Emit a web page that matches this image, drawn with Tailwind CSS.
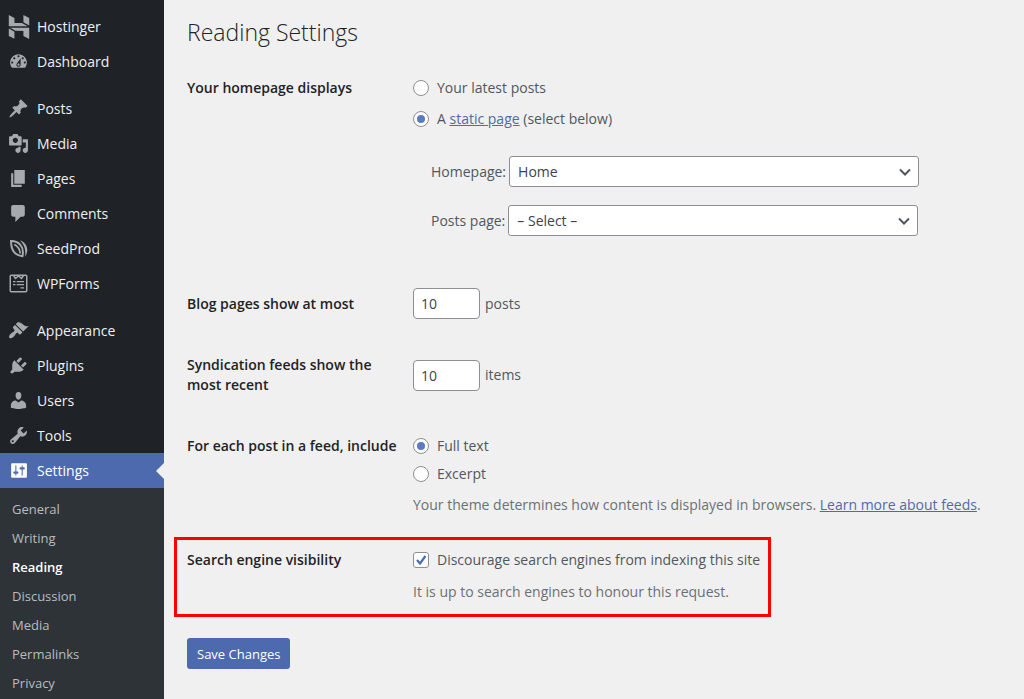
<!DOCTYPE html>
<html lang="en">
<head>
    <meta charset="UTF-8">
    <meta name="viewport" content="width=device-width, initial-scale=1.0">
    <title>Reading Settings</title>
    <script src="https://cdn.jsdelivr.net/npm/@tailwindcss/browser@4"></script>
</head>
<body class="bg-[#f0f0f0] font-['Open_Sans','Noto_Sans',sans-serif] text-sm text-[#50575e]">
    <div class="flex h-screen overflow-hidden">
        <!-- Admin menu -->
        <nav class="flex w-41 shrink-0 flex-col bg-[#1f2327] pt-[9px] text-[#f0f0f1]">
            <ul>
                <li><a href="#" class="flex h-[35px] items-center">
                    <span class="flex w-[37px] justify-center text-[#a7aaad]"><svg class="size-6" viewBox="0 0 24 24" fill="currentColor"><path d="M16.415 0v7.16l5.785 3.384V2.949L16.415 0ZM1.8 0v11.237h18.815L14.89 8.09l-7.457-.003V3.024L1.8 0Zm14.615 20.894v-5.019l-7.514-.005c.007.033-5.82-3.197-5.82-3.197l19.119.091V24l-5.785-3.106ZM1.8 13.551v7.343l5.633 2.949v-6.988L1.8 13.551Z"/></svg></span>
                    Hostinger</a></li>
                <li><a href="#" class="flex h-[35px] items-center">
                    <span class="flex w-[37px] justify-center text-[#a7aaad]"><svg class="size-[21px]" viewBox="0 0 20 20" fill="currentColor"><path d="M3.76 16h12.48c1.1-1.37 1.76-3.11 1.76-5 0-4.42-3.58-8-8-8s-8 3.58-8 8c0 1.89.66 3.63 1.76 5zM10 4c.55 0 1 .45 1 1s-.45 1-1 1-1-.45-1-1 .45-1 1-1zM6 6c.55 0 1 .45 1 1s-.45 1-1 1-1-.45-1-1 .45-1 1-1zm8 0c.55 0 1 .45 1 1s-.45 1-1 1-1-.45-1-1 .45-1 1-1zm-5.37 5.55L12 7v6c0 1.1-.9 2-2 2s-2-.9-2-2c0-.57.24-1.08.63-1.45zM4 10c.55 0 1 .45 1 1s-.45 1-1 1-1-.45-1-1 .45-1 1-1zm12 0c.55 0 1 .45 1 1s-.45 1-1 1-1-.45-1-1 .45-1 1-1zm-5 3c0-.55-.45-1-1-1s-1 .45-1 1 .45 1 1 1 1-.45 1-1z"/></svg></span>
                    Dashboard</a></li>
            </ul>
            <ul class="pt-3">
                <li><a href="#" class="flex h-[35px] items-center">
                    <span class="flex w-[37px] justify-center text-[#a7aaad]"><svg class="size-[21px]" viewBox="0 0 20 20" fill="currentColor"><path d="M10.44 3.02l1.82-1.82 6.36 6.35-1.83 1.82c-1.05-.68-2.48-.57-3.41.36l-.75.75c-.92.93-1.04 2.35-.35 3.41l-1.83 1.82-2.41-2.41-2.8 2.79c-.42.42-3.38 2.71-3.8 2.29s1.86-3.39 2.28-3.81l2.79-2.79L4.1 9.36l1.83-1.82c1.05.69 2.48.57 3.4-.36l.75-.75c.93-.92 1.05-2.35.36-3.41z"/></svg></span>
                    Posts</a></li>
                <li><a href="#" class="flex h-[35px] items-center">
                    <span class="flex w-[37px] justify-center text-[#a7aaad]"><svg class="size-[21px]" viewBox="0 0 20 20" fill="currentColor"><path d="M13 11V4c0-.55-.45-1-1-1h-1.67L9 1H5L3.67 3H2c-.55 0-1 .45-1 1v7c0 .55.45 1 1 1h10c.55 0 1-.45 1-1zM7 4.5c1.38 0 2.5 1.12 2.5 2.5S8.38 9.5 7 9.5 4.5 8.38 4.5 7 5.62 4.5 7 4.5zM14 6h5v10.5c0 1.38-1.12 2.5-2.5 2.5S14 17.88 14 16.5s1.12-2.5 2.5-2.5c.17 0 .34.02.5.05V9h-3V6zm-4 8.05V13h2v3.5c0 1.38-1.12 2.5-2.5 2.5S7 17.88 7 16.5 8.12 14 9.5 14c.17 0 .34.02.5.05z"/></svg></span>
                    Media</a></li>
                <li><a href="#" class="flex h-[35px] items-center">
                    <span class="flex w-[37px] justify-center text-[#a7aaad]"><svg class="size-[21px]" viewBox="0 0 20 20" fill="currentColor"><path d="M6 15V2h10v13H6zm-1 1h8v2H3V5h2v11z"/></svg></span>
                    Pages</a></li>
                <li><a href="#" class="flex h-[35px] items-center">
                    <span class="flex w-[37px] justify-center text-[#a7aaad]"><svg class="size-[21px]" viewBox="0 0 20 20" fill="currentColor"><path d="M5 2h9c1.1 0 2 .9 2 2v7c0 1.1-.9 2-2 2h-2l-5 5v-5H5c-1.1 0-2-.9-2-2V4c0-1.1.9-2 2-2z"/></svg></span>
                    Comments</a></li>
                <li><a href="#" class="flex h-[35px] items-center">
                    <span class="flex w-[37px] justify-center text-[#a7aaad]"><svg class="size-[21px]" viewBox="0 0 20 20" fill="none" stroke="currentColor" stroke-width="1.9"><path d="M2.9 2.9C2.8 11 5.4 16.300 13.800 17.300 15.600 8.700 11 3 2.900 2.900z"/><path stroke-width="1.6" d="M6 6.200c3.800 2 5.400 4.600 5.600 8.600"/><path fill="currentColor" stroke="none" d="M11.500 2.400c5.300 1.400 8.600 7.200 5.900 13.400l-1.300 2.100c1.100-6.300-.3-11.300-4.600-15.500z"/></svg></span>
                    SeedProd</a></li>
                <li><a href="#" class="flex h-[35px] items-center">
                    <span class="flex w-[37px] justify-center text-[#a7aaad]"><svg class="size-[21px]" viewBox="0 0 21 21" fill="none" stroke="currentColor" stroke-width="1.5"><rect x="2.25" y="2.25" width="16.5" height="16.5" rx="1"/><path d="M5.5 2.5l2 3 3-2.5 3 2.5 2-3"/><path stroke-width="1.3" d="M5 8.700h2.500M8.700 8.700H16M5 11.700h2.500M8.700 11.700H16M12.500 14.800H16"/></svg></span>
                    WPForms</a></li>
            </ul>
            <ul class="pt-3">
                <li><a href="#" class="flex h-[35px] items-center">
                    <span class="flex w-[37px] justify-center text-[#a7aaad]"><svg class="size-[21px]" viewBox="0 0 20 20" fill="currentColor"><path d="M14.48 11.06L7.41 3.99l1.5-1.5c.5-.56 2.3-.47 3.51.32 1.21.8 1.43 1.28 2.91 2.1 1.18.64 2.45 1.26 4.45.85zm-.71.71L6.7 4.7 4.93 6.47c-.39.39-.39 1.02 0 1.41l1.06 1.06c.39.39.39 1.03 0 1.42-.6.6-1.43 1.11-2.21 1.69-.35.26-.7.53-1.01.84C1.43 14.23.4 16.08 1.4 17.07c.99 1 2.84-.03 4.18-1.36.31-.31.58-.66.85-1.02.57-.78 1.08-1.61 1.69-2.21.39-.39 1.02-.39 1.41 0l1.06 1.06c.39.39 1.02.39 1.41 0z"/></svg></span>
                    Appearance</a></li>
                <li><a href="#" class="flex h-[35px] items-center">
                    <span class="flex w-[37px] justify-center text-[#a7aaad]"><svg class="size-[21px]" viewBox="0 0 20 20" fill="currentColor"><path d="M13.11 4.36L9.87 7.6 8 5.73l3.24-3.24c.35-.34 1.05-.2 1.56.32.52.51.66 1.21.31 1.55zm-8 1.77l.91-1.12 9.01 9.01-1.19.84c-.71.71-2.63 1.16-3.82 1.16H6.14L4.9 17.26c-.59.59-1.54.59-2.12 0-.59-.58-.59-1.53 0-2.12l1.24-1.24v-3.88c0-1.13.4-3.19 1.09-3.89zm7.26 3.97l3.24-3.24c.34-.35 1.04-.21 1.55.31.52.51.66 1.21.31 1.55l-3.24 3.25z"/></svg></span>
                    Plugins</a></li>
                <li><a href="#" class="flex h-[35px] items-center">
                    <span class="flex w-[37px] justify-center text-[#a7aaad]"><svg class="size-[21px]" viewBox="0 0 20 20" fill="currentColor"><path d="M10 9.25c-2.27 0-2.73-3.44-2.73-3.44C7 4.02 7.82 2 9.97 2c2.16 0 2.98 2.02 2.71 3.81 0 0-.41 3.44-2.68 3.44zm0 2.57L12.72 10c2.39 0 4.52 2.33 4.52 4.53v2.49s-3.65 1.13-7.24 1.13c-3.65 0-7.24-1.13-7.24-1.13v-2.49c0-2.25 1.94-4.48 4.47-4.48z"/></svg></span>
                    Users</a></li>
                <li><a href="#" class="flex h-[35px] items-center">
                    <span class="flex w-[37px] justify-center text-[#a7aaad]"><svg class="size-[21px]" viewBox="0 0 20 20" fill="currentColor"><path d="M16.68 9.77c-1.34 1.34-3.3 1.67-4.95.99l-5.41 6.52c-.99.99-2.59.99-3.58 0s-.99-2.59 0-3.57l6.52-5.42c-.68-1.65-.35-3.61.99-4.95 1.28-1.28 3.12-1.62 4.72-1.06l-2.89 2.89 2.82 2.82 2.86-2.87c.53 1.58.18 3.39-1.08 4.65zM3.81 16.21c.4.39 1.04.39 1.43 0 .4-.4.4-1.04 0-1.43-.39-.4-1.03-.4-1.43 0-.39.39-.39 1.03 0 1.43z"/></svg></span>
                    Tools</a></li>
                <li><a href="#" class="relative flex h-[35px] items-center bg-[#4c6aad] text-white">
                    <span class="flex w-[37px] justify-center"><svg class="size-[21px]" viewBox="0 0 20 20" fill="currentColor"><path d="M18 16V4c0-.55-.45-1-1-1H4c-.55 0-1 .45-1 1v12c0 .55.45 1 1 1h13c.55 0 1-.45 1-1zM8 11h1c.55 0 1 .45 1 1s-.45 1-1 1H8v1.5c0 .28-.22.5-.5.5s-.5-.22-.5-.5V13H6c-.55 0-1-.45-1-1s.45-1 1-1h1V5.5c0-.28.22-.5.5-.5s.5.22.5.5V11zm5-2h-1c-.55 0-1-.45-1-1s.45-1 1-1h1V5.5c0-.28.22-.5.5-.5s.5.22.5.5V7h1c.55 0 1 .45 1 1s-.45 1-1 1h-1v5.5c0 .28-.22.5-.5.5s-.5-.22-.5-.5V9z"/></svg></span>
                    Settings
                    <span class="absolute top-1/2 right-0 -translate-y-1/2 border-y-8 border-r-8 border-y-transparent border-r-[#f0f0f0]"></span></a></li>
            </ul>
            <!-- Settings submenu -->
            <ul class="grow bg-[#2e3338] px-3 pt-[7px] text-[13px] leading-[29px] text-[#b9bcc0]">
                <li><a href="#">General</a></li>
                <li><a href="#">Writing</a></li>
                <li><a href="#" class="font-semibold text-white">Reading</a></li>
                <li><a href="#">Discussion</a></li>
                <li><a href="#">Media</a></li>
                <li><a href="#">Permalinks</a></li>
                <li><a href="#">Privacy</a></li>
            </ul>
        </nav>

        <!-- Page content -->
        <main class="grow pl-[23px]">
            <h1 class="pt-4 text-[23px] leading-8 font-light text-[#1d2327]">Reading Settings</h1>
            <form class="pt-[30px] leading-5">
                <fieldset class="grid grid-cols-[226px_1fr]">
                    <legend class="contents"><span class="font-semibold text-[#1d2327]">Your homepage displays</span></legend>
                    <div>
                        <label class="flex items-center gap-2">
                            <input type="radio" name="front" class="grid size-4 appearance-none place-items-center rounded-full border border-[#8c8f94] bg-white before:size-2 before:rounded-full checked:before:bg-[#5a7bc0]">
                            Your latest posts
                        </label>
                        <label class="flex items-center gap-2 pt-[11px]">
                            <input type="radio" name="front" checked class="grid size-4 appearance-none place-items-center rounded-full border border-[#8c8f94] bg-white before:size-2 before:rounded-full checked:before:bg-[#5a7bc0]">
                            <span>A <a href="#" class="text-[#5069ae] underline">static page</a> (select below)</span>
                        </label>
                        <div class="flex flex-col gap-[18px] pt-[27px] pl-[18px]">
                            <div class="flex items-center gap-[3px]">
                                <label for="homepage">Homepage:</label>
                                <div class="relative w-[410px]">
                                    <select id="homepage" class="h-[31px] w-full appearance-none rounded-[3px] border border-[#8c8f94] bg-white px-2 text-[#3c434a]">
                                        <option>Home</option>
                                    </select>
                                    <svg class="pointer-events-none absolute top-2 right-1.5 size-4" viewBox="0 0 16 16" fill="none" stroke="#50575e" stroke-width="2"><path d="M3 5.5l5 5 5-5"/></svg>
                                </div>
                            </div>
                            <div class="flex items-center gap-[3px]">
                                <label for="postspage">Posts page:</label>
                                <div class="relative w-[410px]">
                                    <select id="postspage" class="h-[31px] w-full appearance-none rounded-[3px] border border-[#8c8f94] bg-white px-2 text-[#3c434a]">
                                        <option>– Select –</option>
                                    </select>
                                    <svg class="pointer-events-none absolute top-2 right-1.5 size-4" viewBox="0 0 16 16" fill="none" stroke="#50575e" stroke-width="2"><path d="M3 5.5l5 5 5-5"/></svg>
                                </div>
                            </div>
                        </div>
                    </div>
                </fieldset>
                <div class="grid grid-cols-[226px_1fr] items-center pt-[52px]">
                    <label for="blogpages" class="font-semibold text-[#1d2327]">Blog pages show at most</label>
                    <div class="flex items-center gap-[5px]">
                        <input id="blogpages" type="number" value="10" class="h-[31px] w-[67px] rounded-[4px] border border-[#8c8f94] bg-white px-[7px] text-[#3c434a] [appearance:textfield]">
                        posts
                    </div>
                </div>
                <div class="grid grid-cols-[226px_1fr] items-center pt-9">
                    <label for="feeditems" class="pr-10 font-semibold text-[#1d2327]">Syndication feeds show the most recent</label>
                    <div class="flex items-center gap-[5px]">
                        <input id="feeditems" type="number" value="10" class="h-[31px] w-[67px] rounded-[4px] border border-[#8c8f94] bg-white px-[7px] text-[#3c434a] [appearance:textfield]">
                        items
                    </div>
                </div>
                <fieldset class="grid grid-cols-[226px_1fr] pt-[41px]">
                    <legend class="contents"><span class="font-semibold text-[#1d2327]">For each post in a feed, include</span></legend>
                    <div>
                        <label class="flex items-center gap-2">
                            <input type="radio" name="feed" checked class="grid size-4 appearance-none place-items-center rounded-full border border-[#8c8f94] bg-white before:size-2 before:rounded-full checked:before:bg-[#5a7bc0]">
                            Full text
                        </label>
                        <label class="flex items-center gap-2 pt-2">
                            <input type="radio" name="feed" class="grid size-4 appearance-none place-items-center rounded-full border border-[#8c8f94] bg-white before:size-2 before:rounded-full checked:before:bg-[#5a7bc0]">
                            Excerpt
                        </label>
                        <p class="pt-[11px] text-[#6b7076]">Your theme determines how content is displayed in browsers. <a href="#" class="text-[#5069ae] underline">Learn more about feeds</a>.</p>
                    </div>
                </fieldset>
                <div class="mt-[22px] -ml-[13px] grid w-fit grid-cols-[226px_auto] border-3 border-[#fe0000] pt-2.5 pr-2 pb-3 pl-2.5">
                    <span class="font-semibold text-[#1d2327]">Search engine visibility</span>
                    <div>
                        <label class="flex items-center gap-2">
                            <span class="grid size-4 place-items-center">
                                <input type="checkbox" checked class="peer col-start-1 row-start-1 size-4 appearance-none rounded-[3px] border border-[#8c8f94] bg-white">
                                <svg class="invisible z-10 col-start-1 row-start-1 size-4 peer-checked:visible" viewBox="0 0 16 16" fill="none" stroke="#4a6cb8" stroke-width="2.2"><path d="M4 8l3 3.5L12.5 4"/></svg>
                            </span>
                            Discourage search engines from indexing this site
                        </label>
                        <p class="pt-3 text-[#6b7076]">It is up to search engines to honour this request.</p>
                    </div>
                </div>
                <button type="button" class="mt-[21px] h-[31px] rounded-[3px] bg-[#4c6aad] px-2.5 text-[13px] text-white">Save Changes</button>
            </form>
        </main>
    </div>
</body>
</html>
